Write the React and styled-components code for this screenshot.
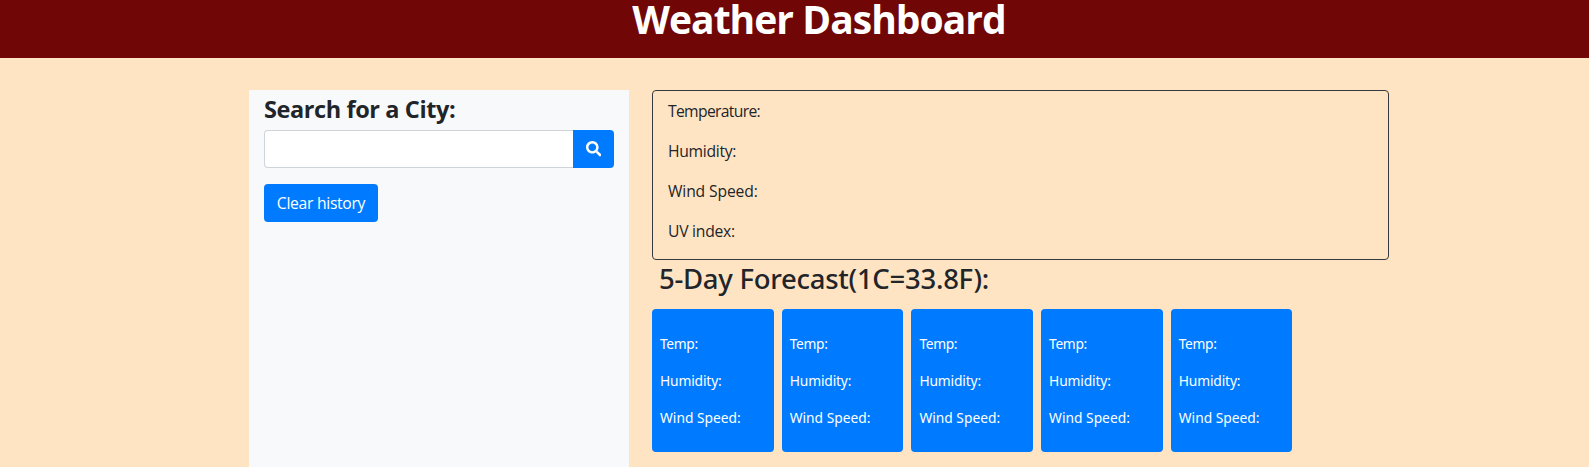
import React from "react";
import styled, { createGlobalStyle } from "styled-components";
import { FaSearch } from "react-icons/fa";

const GlobalStyle = createGlobalStyle`
  *, *::before, *::after { box-sizing: border-box; }
  html, body { margin: 0; height: 100%; overflow: hidden; }
  body {
    background: #ffe4c4;
    color: #212529;
    font-family: "Open Sans", "Noto Sans", sans-serif;
    font-size: 15.7px;
    line-height: 24px;
  }
  #root { height: 100%; }
`;

const Page = styled.div`
  display: flex;
  flex-direction: column;
  height: 100%;
`;

const Header = styled.header`
  flex: none;
  height: 58px;
  padding-left: 49px;
  background: #700606;
  text-align: center;
`;

const Title = styled.h1`
  margin: 0;
  color: #fff;
  font-size: 39px;
  font-weight: 700;
  line-height: 38px;
  letter-spacing: -0.97px;
`;

const Container = styled.main`
  display: flex;
  flex: 1;
  gap: 23px;
  width: 1140px;
  margin: 32px 0 0 249px;
`;

const Sidebar = styled.aside`
  width: 380px;
  padding: 5px 15px 0;
  background: #f8f9fa;
`;

const SearchTitle = styled.h2`
  margin: 0 0 6px;
  font-size: 23.5px;
  font-weight: 700;
  line-height: 29px;
  letter-spacing: -0.4px;
`;

const SearchGroup = styled.form`
  display: flex;
  margin-bottom: 16px;
`;

const SearchInput = styled.input`
  flex: 1;
  min-width: 0;
  height: 38px;
  padding: 6px 12px;
  border: 1px solid #ced4da;
  border-right: 0;
  border-radius: 4px 0 0 4px;
  background: #fff;
  font: inherit;
  outline: none;
`;

const Button = styled.button`
  display: flex;
  align-items: center;
  justify-content: center;
  width: ${(p) => p.$width}px;
  height: 38px;
  padding: 0;
  border: 0;
  border-radius: ${(p) => (p.$attached ? "0 4px 4px 0" : "4px")};
  background: #007bff;
  color: #fff;
  font: inherit;
  letter-spacing: -0.3px;
`;

const Content = styled.section`
  width: 737px;
`;

const Current = styled.div`
  height: 170px;
  padding: 8px 15px 0;
  border: 1px solid #343a40;
  border-radius: 4px;
`;

const Reading = styled.p`
  margin: 0 0 16px;
  letter-spacing: ${(p) => p.$tracking}px;
`;

const ForecastTitle = styled.h3`
  margin: 0 0 14px 7px;
  padding-top: 2px;
  font-family: "Noto Sans", sans-serif;
  font-size: 27.5px;
  font-weight: 500;
  line-height: 33px;
  letter-spacing: -0.27px;
`;

const Forecast = styled.div`
  display: flex;
  gap: 8px;
`;

const DayCard = styled.article`
  width: 121.7px;
  height: 143px;
  padding: 24px 8px 0;
  border-radius: 4px;
  background: #007bff;
  color: #fff;
  font-family: "Noto Sans", sans-serif;
  font-size: 13.8px;
  line-height: 21px;
`;

const current = [
  { label: "Temperature:", tracking: -0.67 },
  { label: "Humidity:", tracking: -0.3 },
  { label: "Wind Speed:", tracking: -0.15 },
  { label: "UV index:", tracking: -0.25 },
];

const daily = [
  { label: "Temp:", tracking: -0.35 },
  { label: "Humidity:", tracking: -0.15 },
  { label: "Wind Speed:", tracking: 0 },
];

const days = [1, 2, 3, 4, 5];

export default function App() {
  return (
    <Page>
      <GlobalStyle />
      <Header>
        <Title>Weather Dashboard</Title>
      </Header>
      <Container>
        <Sidebar>
          <SearchTitle>Search for a City:</SearchTitle>
          <SearchGroup>
            <SearchInput aria-label="City" />
            <Button type="button" $width={41} $attached aria-label="Search">
              <FaSearch size={15.5} />
            </Button>
          </SearchGroup>
          <Button type="button" $width={114}>Clear history</Button>
        </Sidebar>
        <Content>
          <Current>
            {current.map((r) => (
              <Reading key={r.label} $tracking={r.tracking}>{r.label}</Reading>
            ))}
          </Current>
          <ForecastTitle>5-Day Forecast(1C=33.8F):</ForecastTitle>
          <Forecast>
            {days.map((day) => (
              <DayCard key={day}>
                {daily.map((r) => (
                  <Reading key={r.label} $tracking={r.tracking}>{r.label}</Reading>
                ))}
              </DayCard>
            ))}
          </Forecast>
        </Content>
      </Container>
    </Page>
  );
}
